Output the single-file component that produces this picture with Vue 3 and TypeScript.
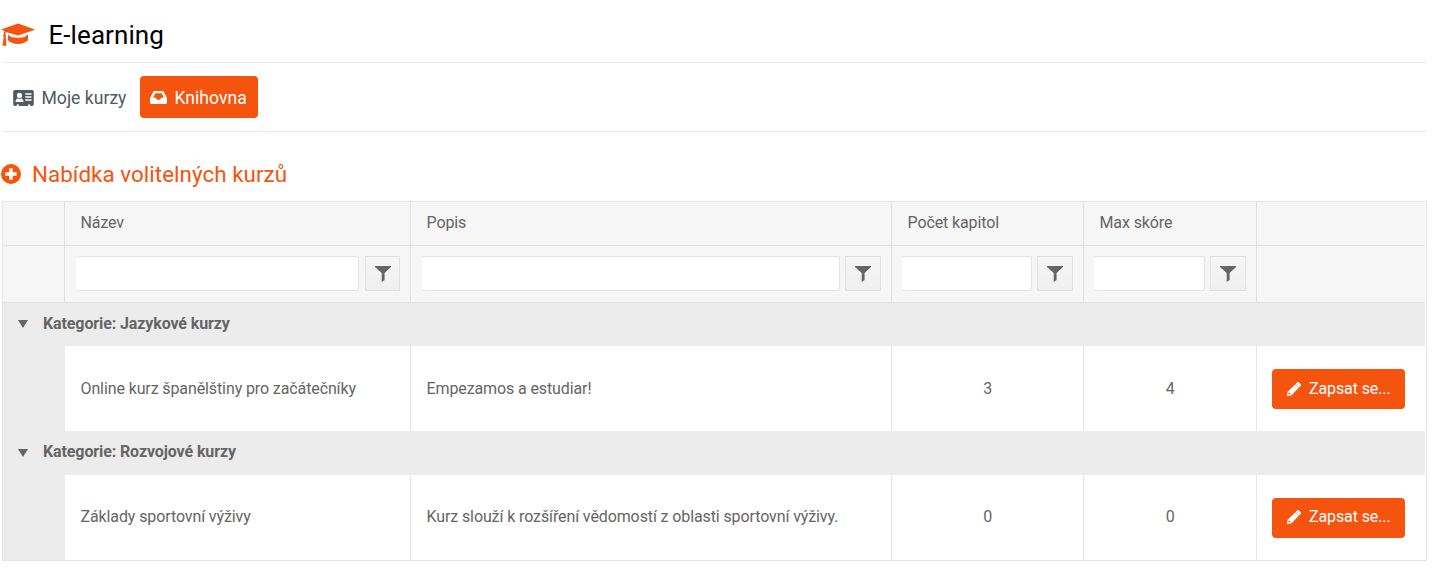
<script setup lang="ts">
interface Course {
  name: string
  description: string
  chapters: number
  maxScore: number
}
interface Category {
  title: string
  courses: Course[]
}

const columns: string[] = ['Název', 'Popis', 'Počet kapitol', 'Max skóre']
const categories: Category[] = [
  {
    title: 'Jazykové kurzy',
    courses: [
      { name: 'Online kurz španělštiny pro začátečníky', description: 'Empezamos a estudiar!', chapters: 3, maxScore: 4 },
    ],
  },
  {
    title: 'Rozvojové kurzy',
    courses: [
      { name: 'Základy sportovní výživy', description: 'Kurz slouží k rozšíření vědomostí z oblasti sportovní výživy.', chapters: 0, maxScore: 0 },
    ],
  },
]
</script>

<template>
  <main class="page">
    <header class="title-bar">
      <svg class="cap" viewBox="0 0 34 24">
        <path d="M17 .6 33.2 6.2q1 .4 0 .8L17 12.400 6.500 9.600 5.300 9.300Q4.300 10 4.200 11.300 5.500 12.400 4.700 14L5.500 22.800H1.500L2.700 14Q1.700 12.600 2.600 11.400 2.700 9.400 3.500 8L.8 7q-1-.4 0-.8z" />
        <path d="M7.200 11.400Q9.500 14.400 13 14.500L17 14.800 21 14.500Q24.500 14.300 26.800 11.200L27.200 17Q23.500 21 17 21T6.800 17z" />
      </svg>
      <h1>E-learning</h1>
    </header>

    <nav class="tabs">
      <a class="tab">
        <svg class="card-icon" viewBox="0 0 576 448">
          <path fill-rule="evenodd" d="M528 0H48C22 0 0 22 0 48v352c0 27 22 48 48 48h48v-14c0-44 64-44 64 0v14h256v-14c0-44 64-44 64 0v14h48c26 0 48-21 48-48V48c0-26-22-48-48-48zM176 80a72 72 0 1 1 0 144 72 72 0 0 1 0-144zM64 325c0-48 32-87 67-87q45 18 90 0c35 0 67 39 67 87v11H64zM336 92h176v38H336zM336 176h176v38H336zM336 260h176v38H336z" />
        </svg>
        Moje kurzy
      </a>
      <a class="tab active">
        <svg class="inbox-icon" viewBox="0 0 576 448" preserveAspectRatio="none">
          <path fill-rule="evenodd" d="M566 220 466 28Q450 0 422 0H154Q126 0 110 28L10 220Q0 236 0 256V400c0 26 22 48 48 48h480c26 0 48-22 48-48V256q0-20-10-36zM180 76h216l74 156H378l-36 72H234l-36-72H106z" />
        </svg>
        Knihovna
      </a>
    </nav>

    <h2>
      <svg class="plus-icon" viewBox="0 0 20 20">
        <path fill-rule="evenodd" d="M10 0a10 10 0 1 1 0 20 10 10 0 0 1 0-20zM8.300 4.300v4H4.300v3.400h4v4h3.400v-4h4V8.300h-4v-4z" />
      </svg>
      Nabídka volitelných kurzů
    </h2>

    <section class="grid">
      <div class="row head">
        <div></div>
        <div v-for="column in columns" :key="column">{{ column }}</div>
        <div></div>
      </div>
      <div class="row filters">
        <div></div>
        <div v-for="column in columns" :key="column">
          <input type="text" :aria-label="column" />
          <button type="button" class="filter">
            <svg viewBox="0 0 16 16"><path d="M0 0h16v1L9.600 7v7L6.700 16V7L0 1z" /></svg>
          </button>
        </div>
        <div></div>
      </div>
      <template v-for="category in categories" :key="category.title">
        <div class="group">
          <svg viewBox="0 0 10 8"><path d="M0 0h10L5 8z" /></svg>
          Kategorie: {{ category.title }}
        </div>
        <div v-for="course in category.courses" :key="course.name" class="row course">
          <div></div>
          <div>{{ course.name }}</div>
          <div>{{ course.description }}</div>
          <div class="number">{{ course.chapters }}</div>
          <div class="number">{{ course.maxScore }}</div>
          <div class="action">
            <button type="button" class="enroll">
              <svg viewBox="0 0 512 512">
                <path fill-rule="evenodd" d="M497.900 142.100l-46.100 46.100c-4.700 4.700-12.300 4.700-17 0l-111-111c-4.700-4.700-4.700-12.300 0-17l46.100-46.100c18.700-18.700 49.100-18.700 67.900 0l60.100 60.100c18.800 18.700 18.800 49.100 0 67.900zM295 87L21.600 355.400.4 483.900c-2.900 16.400 11.400 30.600 27.800 27.800l128.500-21.300 270-268.600c4.700-4.700 4.700-12.300 0-17l-113-116c-4.800-4.700-14-6-18.700-1.800zM92 424h36v30l-50 9-29-29L58 388h34v36z" />
              </svg>
              Zapsat se...
            </button>
          </div>
        </div>
      </template>
    </section>
  </main>
</template>

<style>
body {
  margin: 0;
  background: #fff;
}
</style>

<style scoped>
* {
  box-sizing: border-box;
}
.page {
  height: 569px;
  padding: 0 10px 0 2px;
  font: 16px/24px Roboto, sans-serif;
  color: #656565;
}
svg {
  display: block;
  flex: none;
  fill: currentColor;
}
.title-bar {
  display: flex;
  align-items: center;
  height: 63px;
  padding-top: 8px;
  border-bottom: 1px solid #ebebeb;
}
.cap {
  width: 34px;
  height: 24px;
  margin-left: -1px;
  color: #f4540d;
}
h1 {
  margin: 0 0 0 13.5px;
  font-size: 26px;
  font-weight: 400;
  line-height: 32px;
  letter-spacing: 0.08px;
  color: #000;
}
.tabs {
  display: flex;
  align-items: center;
  gap: 3px;
  height: 69px;
  border-bottom: 1px solid #ebebeb;
}
.tab {
  display: flex;
  align-items: center;
  gap: 7.5px;
  width: 135px;
  height: 42px;
  padding: 1px 0 0 11px;
  border-radius: 4px;
  font-size: 17.6px;
  white-space: nowrap;
  color: #505a60;
}
.active {
  width: 118px;
  padding-left: 10px;
  background: #f4540d;
  color: #fff;
}
.card-icon {
  width: 21px;
  height: 16px;
}
.inbox-icon {
  width: 17px;
  height: 13px;
}
h2 {
  display: flex;
  align-items: center;
  gap: 11px;
  height: 69px;
  margin: 0;
  padding-top: 14px;
  font-size: 22.4px;
  font-weight: 400;
  letter-spacing: 0.04px;
  color: #f4540d;
}
.plus-icon {
  width: 20px;
  height: 20px;
  margin-left: -1px;
}
.grid {
  height: 360px;
  padding-right: 1px;
  border: 1px solid #e6e6e6;
  letter-spacing: -0.11px;
}
.row {
  display: grid;
  grid-template-columns: 62px 346px 481px 192px 173px 168px;
}
.row > div {
  display: flex;
  align-items: center;
  padding: 0 15px 0 15.5px;
  border-right: 1px solid #e0e0e0;
}
.row > div:last-child {
  border-right: 0;
}
.head,
.filters {
  background: #f6f6f6;
  border-bottom: 1px solid #e0e0e0;
}
.head {
  height: 44px;
}
.head > div {
  padding-bottom: 2px;
}
.filters {
  height: 57px;
}
.filters > div {
  gap: 5px;
  padding: 0 10px 1px;
}
.filters > div:nth-child(2) {
  gap: 6px;
  padding-left: 11px;
}
.filters > div:nth-child(3) {
  padding-left: 11px;
}
input {
  flex: 1;
  min-width: 0;
  height: 35px;
  border: 1px solid #e2e2e2;
  border-left: 0;
  border-radius: 3px;
  background: #fff;
}
.filter {
  display: flex;
  align-items: center;
  justify-content: center;
  width: 36px;
  height: 35px;
  padding: 0;
  border: 1px solid #e0e0e0;
  background: linear-gradient(#f6f6f6, #efefef);
  color: #656565;
}
.filters > div:nth-child(2) .filter {
  width: 35px;
}
.filter svg {
  width: 16px;
  height: 16px;
}
.group {
  display: flex;
  align-items: center;
  gap: 15px;
  height: 43px;
  padding: 0 15px 2px;
  background: #ececec;
  font-weight: 700;
}
.group svg {
  width: 10px;
  height: 8px;
  margin-top: 1px;
}
.course ~ .group {
  height: 44px;
  padding-bottom: 3px;
}
.course ~ .group svg {
  margin-top: 3px;
}
.course {
  height: 85px;
}
.course > div {
  border-color: #e6e6e6;
}
.course ~ .course > div:not(.action) {
  padding-bottom: 2px;
}
.course > div:first-child {
  background: #ececec;
  border-color: #ececec;
}
.course > .number {
  justify-content: center;
}
.course > .action {
  padding-left: 15px;
}
.enroll {
  display: flex;
  align-items: center;
  gap: 8px;
  height: 40px;
  width: 133px;
  padding: 0 15px;
  border: 0;
  border-radius: 4px;
  background: #f4540d;
  color: #fff;
  font: inherit;
  letter-spacing: inherit;
  white-space: nowrap;
}
.course ~ .course .enroll {
  padding-bottom: 2px;
}
.enroll svg {
  width: 14px;
  height: 14px;
}
</style>
